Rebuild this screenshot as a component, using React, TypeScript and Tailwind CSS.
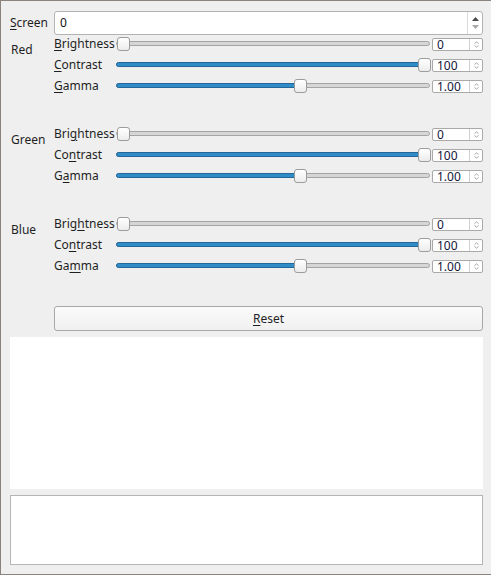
import React from 'react';

const FONT = { fontFamily: '"Noto Sans", "Open Sans", sans-serif' };

function U({ children }: { children: React.ReactNode }) {
  return <span className="underline underline-offset-[2px] decoration-[1px]">{children}</span>;
}

function SmallSpin({ value }: { value: string }) {
  return (
    <div className="w-[51px] h-[13px] flex bg-white border border-[#a9a9a9] rounded-[2px] overflow-hidden">
      <div className="flex-1 pl-[4px] overflow-hidden">
        <div className="text-[12px] leading-[14px] mt-[-1px] text-[#15153a]">{value}</div>
      </div>
      <div className="w-[13px] border-l border-[#d0d0d0] flex items-center justify-center">
        <svg width="5" height="7" viewBox="0 0 5 7">
          <path d="M0.5 2.6 L2.5 0.8 L4.5 2.6" fill="none" stroke="#9a9a9a" strokeWidth="0.9" />
          <path d="M0.5 4.4 L2.5 6.2 L4.5 4.4" fill="none" stroke="#9a9a9a" strokeWidth="0.9" />
        </svg>
      </div>
    </div>
  );
}

function Slider({ pos, fill }: { pos: number; fill: boolean }) {
  return (
    <div className="relative flex-1 h-[14px]">
      <div className="absolute left-0 right-0 top-[4px] h-[5px] rounded-full border border-[#a4a4a4] bg-[#d6d6d6]" />
      {fill && (
        <div
          className="absolute left-0 top-[4px] h-[5px] rounded-full border border-[#24689a] bg-[#308cc6]"
          style={{ width: pos + 6 }}
        />
      )}
      <div
        className="absolute top-0 w-[13px] h-[14px] rounded-[3px] border border-[#9c9c9c] bg-gradient-to-b from-white to-[#ececec]"
        style={{ left: pos }}
      />
    </div>
  );
}

function Row({ label, pos, fill, value }: { label: React.ReactNode; pos: number; fill: boolean; value: string }) {
  return (
    <div className="flex items-center h-[14px]">
      <div className="w-[62px] text-[12px] leading-[14px] text-[#1f1f1f] whitespace-nowrap">{label}</div>
      <Slider pos={pos} fill={fill} />
      <div className="w-[2px]" />
      <SmallSpin value={value} />
    </div>
  );
}

function Group({
  name,
  labels,
}: {
  name: string;
  labels: [React.ReactNode, React.ReactNode, React.ReactNode];
}) {
  return (
    <div className="flex">
      <div className="w-[44px] pl-[1px] pt-[5px] text-[12px] leading-[16px] text-[#1f1f1f]">{name}</div>
      <div className="flex-1 flex flex-col gap-[7px]">
        <Row label={labels[0]} pos={1} fill={false} value="0" />
        <Row label={labels[1]} pos={302} fill={true} value="100" />
        <Row label={labels[2]} pos={178} fill={true} value="1.00" />
      </div>
    </div>
  );
}

export default function App() {
  return (
    <div
      className="w-[491px] h-[575px] bg-[#efefef] border-l border-t border-b border-[#8b837e] pl-[9px] pr-[8px] pt-[10px] flex flex-col"
      style={FONT}
    >
      <div className="flex items-center h-[24px]">
        <div className="w-[44px] text-[12px] text-[#1f1f1f]">
          <U>S</U>creen
        </div>
        <div className="flex-1 h-[24px] flex bg-white border border-[#b3b3b3] rounded-[3px]">
          <div className="flex-1 pl-[5px] text-[12px] leading-[22px] text-[#111]">0</div>
          <div className="w-[15px] border-l border-[#dadada] flex flex-col items-center justify-center gap-[4px]">
            <svg width="7" height="4" viewBox="0 0 7 4">
              <path d="M0 4 L3.5 0 L7 4 Z" fill="#4a4a4a" />
            </svg>
            <svg width="7" height="4" viewBox="0 0 7 4">
              <path d="M0 0 L3.5 4 L7 0 Z" fill="#a8a8a8" />
            </svg>
          </div>
        </div>
      </div>

      <div className="mt-[2px]">
        <Group
          name="Red"
          labels={[
            <><U>B</U>rightness</>,
            <><U>C</U>ontrast</>,
            <><U>G</U>amma</>,
          ]}
        />
      </div>
      <div className="mt-[34px]">
        <Group
          name="Green"
          labels={[
            <>Bri<U>g</U>htness</>,
            <>Co<U>n</U>trast</>,
            <>G<U>a</U>mma</>,
          ]}
        />
      </div>
      <div className="mt-[34px]">
        <Group
          name="Blue"
          labels={[
            <>Brig<U>h</U>tness</>,
            <>Co<U>n</U>trast</>,
            <>Ga<U>m</U>ma</>,
          ]}
        />
      </div>

      <div className="flex mt-[33px]">
        <div className="w-[44px]" />
        <button className="flex-1 h-[25px] rounded-[3px] border border-[#a8a8a8] bg-gradient-to-b from-[#fbfbfb] to-[#f0f0f0] text-[12px] text-[#1f1f1f]">
          <U>R</U>eset
        </button>
      </div>

      <div className="mt-[6px] h-[152px] bg-white" />
      <div className="mt-[6px] h-[70px] bg-white border border-[#b5b5b5]" />
    </div>
  );
}
